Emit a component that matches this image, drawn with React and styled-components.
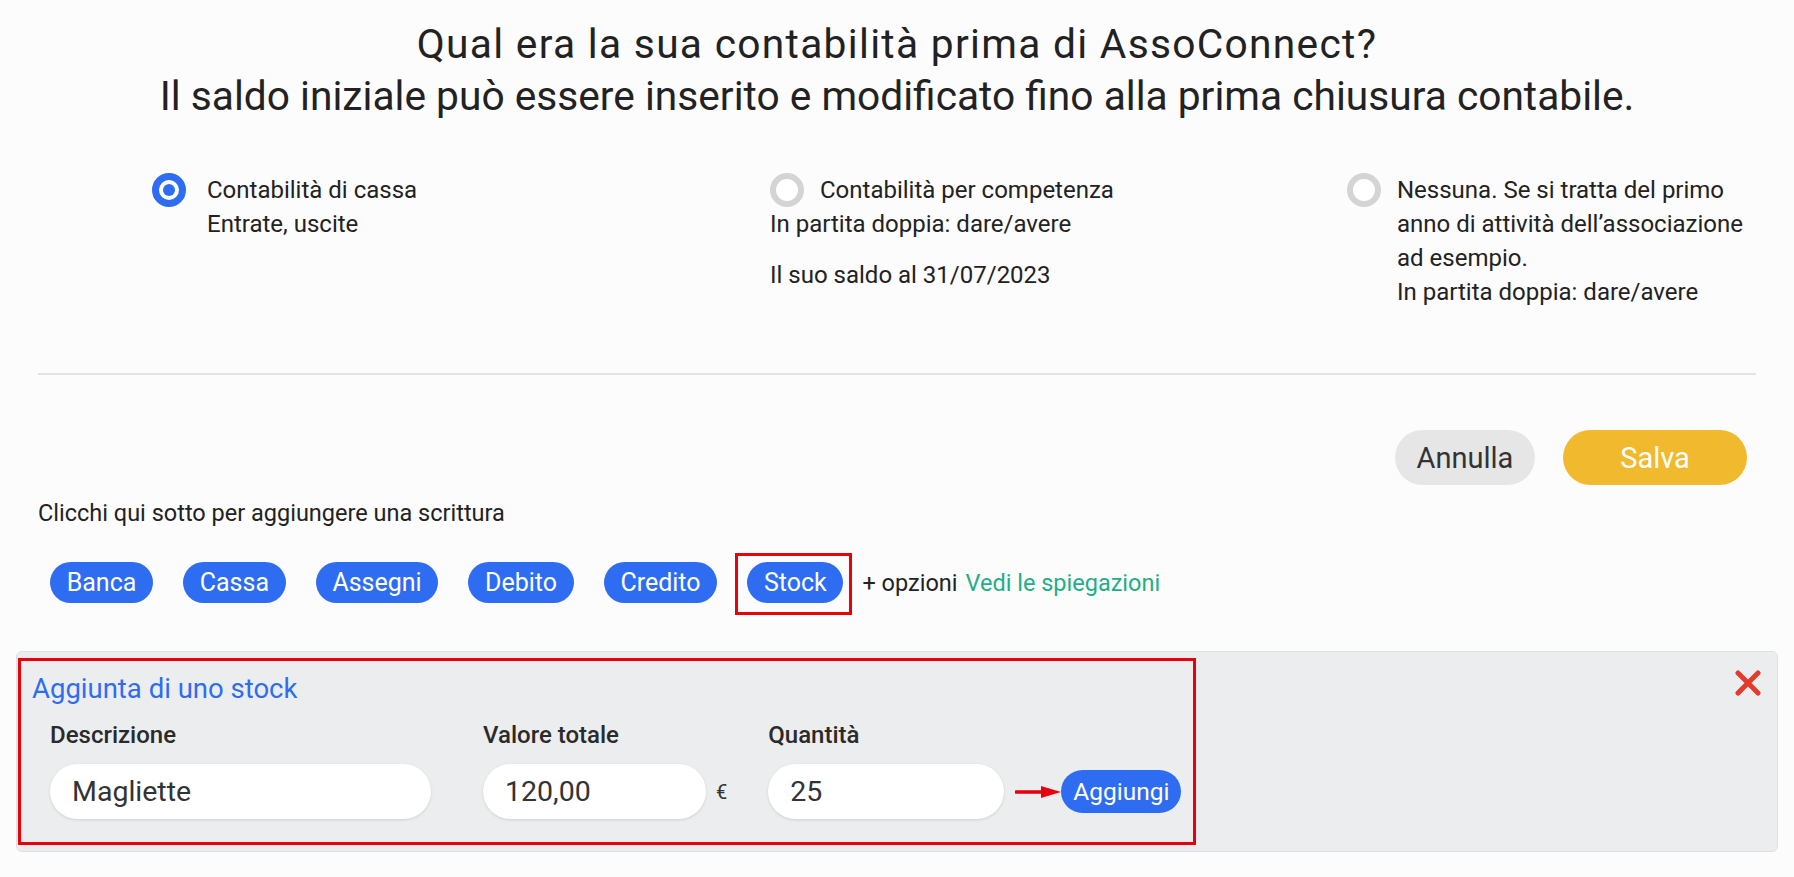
import React, { useState } from "react";
import styled, { createGlobalStyle } from "styled-components";

const GlobalStyle = createGlobalStyle`
  * { box-sizing: border-box; }
  body {
    margin: 0;
    background: #fcfcfc;
    font-family: Roboto, "Liberation Sans", sans-serif;
    color: #222;
  }
`;

const Page = styled.div`
  padding: 18px 16px 24px;
`;

/* ------- Header ------- */
const Heading = styled.h1`
  margin: 0;
  text-align: center;
  font-size: 40.7px;
  font-weight: 400;
  line-height: 52px;
  color: #222;
`;
const HeadingLine = styled.span`
  display: block;
  letter-spacing: ${(p) => p.$spacing || "0"};
`;

/* ------- Accounting choice ------- */
const Options = styled.div`
  display: grid;
  grid-template-columns: 618px 577px 1fr;
  padding-left: 136px;
  margin-top: 51px;
`;
const Option = styled.label`
  display: grid;
  grid-template-columns: ${(p) => (p.$flush ? "50px auto" : "55px 1fr")};
  align-content: start;
  font-size: 24px;
  line-height: 34px;
  color: #222;
  cursor: pointer;
`;
const Radio = styled.span`
  width: 34px;
  height: 34px;
  border-radius: 50%;
  align-self: center;
  border: ${(p) => (p.$checked ? "7px solid #2e6df2" : "6px solid #d4d4d4")};
  background: white;
  display: flex;
  align-items: center;
  justify-content: center;

  &::after {
    content: "";
    width: 12px;
    height: 12px;
    border-radius: 50%;
    background: ${(p) => (p.$checked ? "#2e6df2" : "transparent")};
  }
`;
const OptionLine = styled.span`
  grid-column: ${(p) => (p.$full ? "1 / -1" : "2")};
  margin-top: ${(p) => (p.$gap ? "17px" : "0")};
  white-space: nowrap;
`;

const Divider = styled.hr`
  margin: 64px 22px 0;
  border: none;
  border-top: 2px solid #e3e3e3;
`;

/* ------- Actions ------- */
const Actions = styled.div`
  display: flex;
  justify-content: flex-end;
  gap: 28px;
  padding-right: 31px;
  margin-top: 55px;
`;
const Pill = styled.button`
  height: 55px;
  min-width: ${(p) => (p.$primary ? "184px" : "140px")};
  padding: 0 20px;
  border: none;
  border-radius: 28px;
  font-family: inherit;
  font-size: 29px;
  background: ${(p) => (p.$primary ? "#f1b92d" : "#e6e6e6")};
  color: ${(p) => (p.$primary ? "white" : "#333")};
  cursor: pointer;
`;

/* ------- Entries ------- */
const Hint = styled.p`
  margin: 14px 22px 0;
  font-size: 23.5px;
  line-height: 28px;
  color: #222;
`;
const ChipRow = styled.div`
  display: flex;
  align-items: center;
  gap: 30px;
  margin: 35px 34px 0;
`;
const Chip = styled.button`
  height: 41px;
  padding: 0 16.7px;
  border: none;
  border-radius: 21px;
  background: #2e6df2;
  color: white;
  font-family: inherit;
  font-size: 25px;
  cursor: pointer;
`;
const Highlight = styled.span`
  display: flex;
  margin: -9px -9px -12px -12px;
  padding: 6px 6px 9px 9px;
  border: 3px solid #e8000b;
`;
const MoreText = styled.span`
  margin-left: -11px;
  font-size: 23.5px;
  color: #222;
`;
const Link = styled.a`
  margin-left: -22px;
  font-size: 23.5px;
  color: #1fae86;
  text-decoration: none;
`;

/* ------- Stock panel ------- */
const Panel = styled.section`
  display: flex;
  align-items: flex-start;
  margin-top: 48px;
  padding: 6px 16px 6px 1px;
  background: #ecedef;
  border: 1px solid #dfe0e2;
  border-radius: 6px;
`;
const FormBox = styled.div`
  width: 1178px;
  border: 3px solid #e8000b;
  padding: 11px 11px 23px;
`;
const PanelTitle = styled.h3`
  margin: 0;
  font-size: 27.5px;
  font-weight: 400;
  line-height: 34px;
  color: #2e6df2;
`;
const Fields = styled.div`
  display: flex;
  align-items: flex-end;
  margin: 15px 0 0 18px;
`;
const Field = styled.div`
  display: flex;
  flex-direction: column;
  gap: 15px;
  margin-right: ${(p) => p.$space || "0"};
`;
const FieldLabel = styled.span`
  font-size: 24px;
  font-weight: 500;
  line-height: 28px;
  color: #2a2a2a;
`;
const InputWrap = styled.div`
  display: flex;
  align-items: center;
  gap: 10px;
`;
const Input = styled.input`
  width: ${(p) => p.$width};
  height: 55px;
  padding: 0 22px;
  border: none;
  border-radius: 28px;
  background: white;
  box-shadow: 0 1px 3px rgba(0, 0, 0, 0.12);
  font-family: inherit;
  font-size: 28.5px;
  color: #333;
  outline: none;
`;
const Unit = styled.span`
  font-size: 20px;
  color: #333;
`;
const AddRow = styled.div`
  display: flex;
  align-items: center;
  height: 55px;
  margin-left: 11px;
`;
const AddButton = styled.button`
  height: 43px;
  padding: 0 12px;
  border: none;
  border-radius: 22px;
  background: #2e6df2;
  color: white;
  font-family: inherit;
  font-size: 24.5px;
  cursor: pointer;
`;
const CloseButton = styled.button`
  margin-left: auto;
  margin-top: 12px;
  padding: 0;
  border: none;
  background: none;
  cursor: pointer;
  display: flex;
`;

const Arrow = () => (
  <svg width="46" height="14" viewBox="0 0 46 14">
    <line x1="1" y1="7" x2="28" y2="7" stroke="#e8000b" strokeWidth="3.5" strokeLinecap="round" />
    <polygon points="26,1 46,7 26,13" fill="#e8000b" />
  </svg>
);

const Cross = () => (
  <svg width="26" height="26" viewBox="0 0 26 26">
    <path d="M3 3 L23 23 M23 3 L3 23" stroke="#e23a2c" strokeWidth="5" strokeLinecap="round" />
  </svg>
);

export default function App() {
  const [mode, setMode] = useState("cassa");
  const entries = ["Banca", "Cassa", "Assegni", "Debito", "Credito", "Stock"];

  return (
    <Page>
      <GlobalStyle />
      <Heading>
        <HeadingLine $spacing="1.3px">
          Qual era la sua contabilità prima di AssoConnect?
        </HeadingLine>
        <HeadingLine>
          Il saldo iniziale può essere inserito e modificato fino alla prima chiusura contabile.
        </HeadingLine>
      </Heading>

      <Options>
        <Option onClick={() => setMode("cassa")}>
          <Radio $checked={mode === "cassa"} />
          <OptionLine>Contabilità di cassa</OptionLine>
          <OptionLine>Entrate, uscite</OptionLine>
        </Option>
        <Option $flush onClick={() => setMode("competenza")}>
          <Radio $checked={mode === "competenza"} />
          <OptionLine>Contabilità per competenza</OptionLine>
          <OptionLine $full>In partita doppia: dare/avere</OptionLine>
          <OptionLine $full $gap>Il suo saldo al 31/07/2023</OptionLine>
        </Option>
        <Option $flush onClick={() => setMode("nessuna")}>
          <Radio $checked={mode === "nessuna"} />
          <OptionLine>Nessuna. Se si tratta del primo</OptionLine>
          <OptionLine>anno di attività dell’associazione</OptionLine>
          <OptionLine>ad esempio.</OptionLine>
          <OptionLine>In partita doppia: dare/avere</OptionLine>
        </Option>
      </Options>

      <Divider />

      <Actions>
        <Pill type="button">Annulla</Pill>
        <Pill type="button" $primary>Salva</Pill>
      </Actions>

      <Hint>Clicchi qui sotto per aggiungere una scrittura</Hint>

      <ChipRow>
        {entries.map((e) =>
          e === "Stock" ? (
            <Highlight key={e}>
              <Chip type="button">{e}</Chip>
            </Highlight>
          ) : (
            <Chip key={e} type="button">
              {e}
            </Chip>
          )
        )}
        <MoreText>+ opzioni</MoreText>
        <Link href="#">Vedi le spiegazioni</Link>
      </ChipRow>

      <Panel>
        <FormBox>
          <PanelTitle>Aggiunta di uno stock</PanelTitle>
          <Fields>
            <Field $space="52px">
              <FieldLabel>Descrizione</FieldLabel>
              <Input $width="381px" defaultValue="Magliette" />
            </Field>
            <Field $space="41px">
              <FieldLabel>Valore totale</FieldLabel>
              <InputWrap>
                <Input $width="223px" defaultValue="120,00" />
                <Unit>€</Unit>
              </InputWrap>
            </Field>
            <Field>
              <FieldLabel>Quantità</FieldLabel>
              <Input $width="236px" defaultValue="25" />
            </Field>
            <AddRow>
              <Arrow />
              <AddButton type="button">Aggiungi</AddButton>
            </AddRow>
          </Fields>
        </FormBox>
        <CloseButton type="button" aria-label="Chiudi">
          <Cross />
        </CloseButton>
      </Panel>
    </Page>
  );
}
